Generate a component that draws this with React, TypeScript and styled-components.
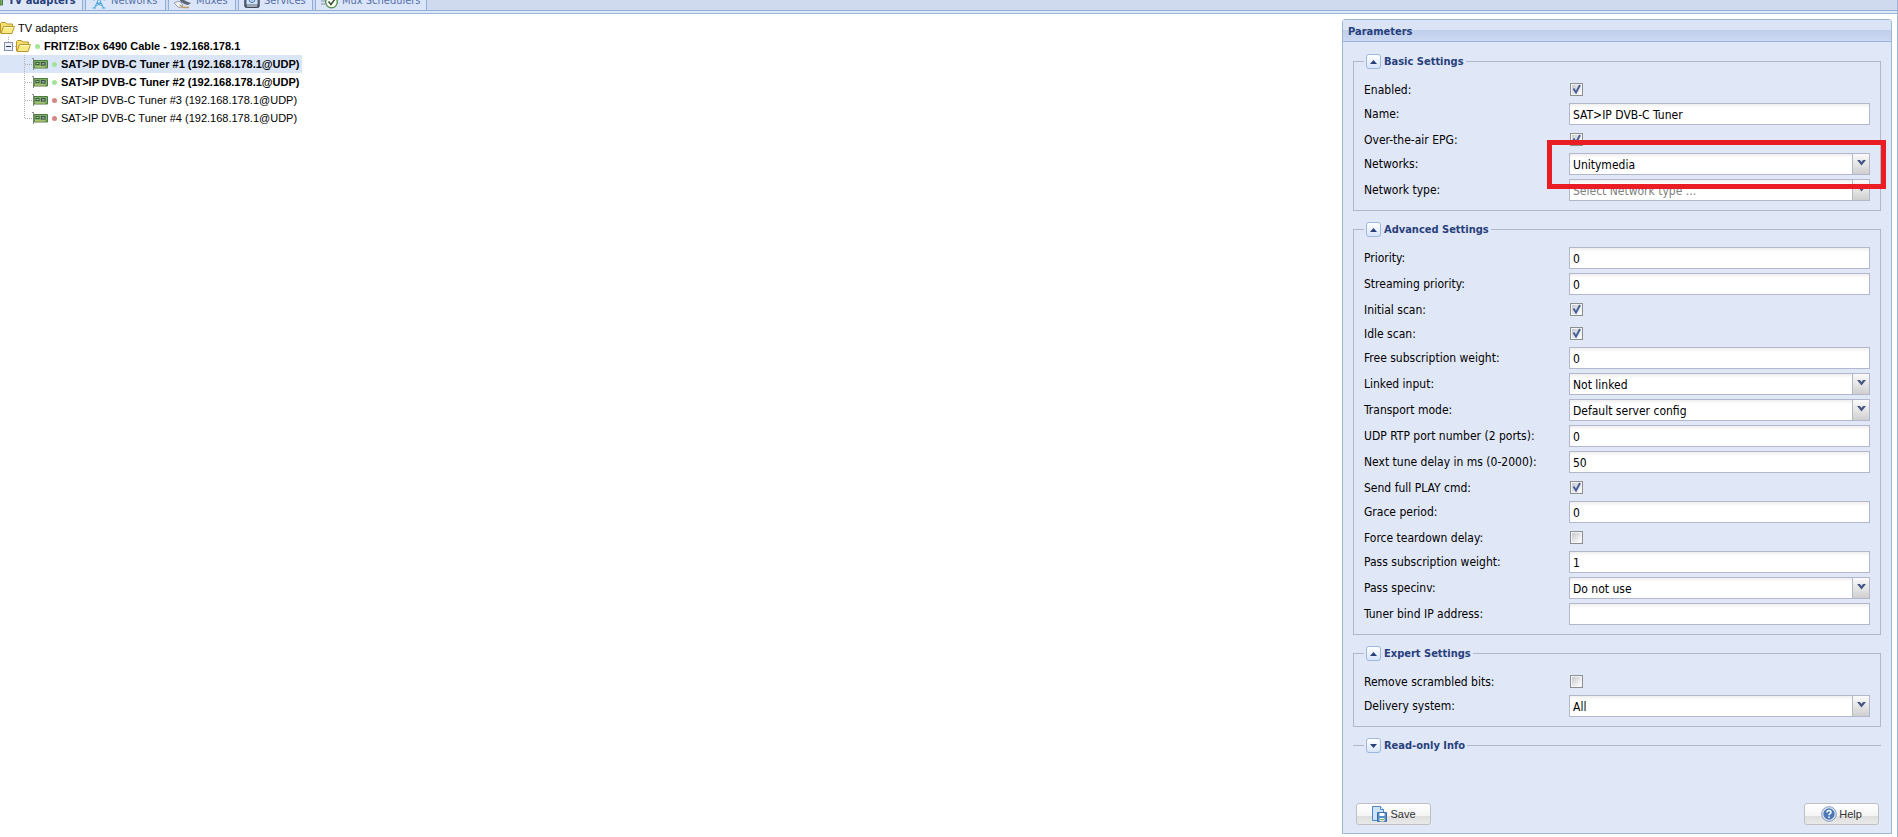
import React, { ReactNode, useState } from "react";
import styled, { createGlobalStyle, css } from "styled-components";

const GlobalStyle = createGlobalStyle`
  *, *::before, *::after { box-sizing: border-box; }
  html, body, #root { height: 100%; }
  body { margin: 0; background: #fff; }
`;

const uiFont = css`
  font-family: "DejaVu Sans Condensed", Tahoma, "DejaVu Sans", sans-serif;
`;
const arial = css`
  font-family: "Liberation Sans", Arial, sans-serif;
`;

const Page = styled.div`
  min-height: 100%;
  display: flex;
  flex-direction: column;
  border-right: 1px solid #99b5dc;
  color: #000;
`;

const TabStrip = styled.nav`
  height: 11px;
  display: flex;
  align-items: flex-end;
  gap: 2px;
  overflow: hidden;
  background: #d0daee;
  border-bottom: 1px solid #94b0d8;
`;

const Tab = styled.a<{ $active?: boolean; $width: number }>`
  ${uiFont}
  flex: none;
  width: ${(p) => p.$width}px;
  height: 19px;
  display: flex;
  align-items: center;
  gap: 4px;
  padding-left: ${(p) => (p.$active ? 0 : 5)}px;
  border: solid #8fadd9;
  border-width: 0 1px;
  border-left-width: ${(p) => (p.$active ? 0 : 1)}px;
  font-size: 11px;
  line-height: 18px;
  white-space: nowrap;
  text-decoration: none;
  font-weight: ${(p) => (p.$active ? "bold" : "normal")};
  color: ${(p) => (p.$active ? "#28417c" : "#5670a6")};
  background: ${(p) => (p.$active ? "#dee8f8" : "#dae5fa")};
`;

const StripFooter = styled.div`
  height: 3px;
  background: #dfe8f6;
  border-bottom: 1px solid #99b5dc;
`;

const Body = styled.div`
  flex: 1;
  display: flex;
  align-items: stretch;
  padding: 5px 5px 3px 0;
`;

const Tree = styled.ul`
  ${arial}
  flex: 1;
  margin: 0;
  padding: 0;
  list-style: none;
  font-size: 11px;
`;

const TreeRow = styled.li<{ $indent: number; $strong?: boolean; $selected?: boolean }>`
  display: flex;
  align-items: center;
  width: max-content;
  height: 18px;
  padding-left: ${(p) => p.$indent}px;
  padding-right: 3px;
  line-height: 18px;
  white-space: nowrap;
  font-weight: ${(p) => (p.$strong ? "bold" : "normal")};
  background: ${(p) => (p.$selected ? "#dae6f8" : "transparent")};
`;

const Dot = styled.span<{ $color: string }>`
  width: 5px;
  height: 5px;
  margin: 0 4px;
  border-radius: 50%;
  background: ${(p) => p.$color};
`;

const Panel = styled.form`
  ${uiFont}
  flex: none;
  width: 550px;
  display: flex;
  flex-direction: column;
  border: 1px solid #9db7d6;
  border-radius: 3px 3px 0 0;
  background: #e0e7f7;
  font-size: 12px;
`;

const PanelTitle = styled.h2`
  margin: 0;
  height: 22px;
  padding: 0 5px;
  font-size: 11px;
  line-height: 23px;
  color: #28417c;
  border-bottom: 1px solid #99b5dc;
  background: linear-gradient(#dae4f5 0 50%, #c0cfed 50%, #cdd9f1 100%);
`;

const Groups = styled.div`
  flex: 1;
  display: flex;
  flex-direction: column;
  gap: 18px;
  padding: 19px 10px 0;
`;

const Group = styled.section<{ $open: boolean }>`
  position: relative;
  border: solid #b2b7cb;
  border-width: ${(p) => (p.$open ? "1px" : "1px 0 0")};
  padding: ${(p) => (p.$open ? "17px 10px 5px" : "0")};
`;

const Legend = styled.h3<{ $open: boolean }>`
  position: absolute;
  top: -8px;
  left: ${(p) => (p.$open ? 10 : 11)}px;
  margin: 0;
  height: 15px;
  display: flex;
  align-items: center;
  gap: 3px;
  padding: 0 2px;
  font-size: 11px;
  line-height: 15px;
  color: #28417c;
  background: #e0e7f7;
`;

const Toggle = styled.button`
  width: 15px;
  height: 15px;
  padding: 0;
  display: grid;
  place-items: center;
  border: 1px solid #9cb9dc;
  border-radius: 3px;
  background: linear-gradient(#fff, #d8e5f7);
`;

const Field = styled.div<{ $check?: boolean }>`
  height: ${(p) => (p.$check ? 24 : 26)}px;
  display: grid;
  grid-template-columns: 205px 1fr;
  align-items: start;
`;

const Label = styled.label`
  line-height: 22px;
  white-space: nowrap;
`;

const inputLook = css`
  ${uiFont}
  width: 100%;
  height: 22px;
  margin: 0;
  border: 1px solid #b2b7cb;
  border-radius: 0;
  font-size: 12px;
  color: #000;
  background: linear-gradient(#eeeeef, #fff 4px);
`;

const TextInput = styled.input`
  ${inputLook}
  padding: 1px 3px 0;
`;

const SelectWrap = styled.div`
  position: relative;
`;

const Select = styled.select<{ $muted: boolean }>`
  ${inputLook}
  appearance: none;
  display: block;
  padding: 1px 20px 0 3px;
  color: ${(p) => (p.$muted ? "#808080" : "#000")};
`;

const Trigger = styled.span`
  position: absolute;
  top: 1px;
  right: 1px;
  width: 17px;
  height: 20px;
  padding-bottom: 2px;
  display: grid;
  place-items: center;
  pointer-events: none;
  border-left: 1px solid #b2b7cb;
  background: linear-gradient(#fafafa, #e6e6e6 50%, #cfcfcf);
`;

const CheckBox = styled.input`
  appearance: none;
  width: 13px;
  height: 13px;
  margin: 4px 1px;
  border: 1px solid #8e8f8f;
  background: linear-gradient(135deg, #c6c9cf, #fff) content-box, #f4f4f4;
  padding: 1px;
  &:checked {
    background: url("data:image/svg+xml,%3Csvg xmlns='http://www.w3.org/2000/svg' viewBox='0 0 11 11'%3E%3Cpath d='M2.500 4.500l2.500 4 4-7.500' fill='none' stroke='%234a5f97' stroke-width='2'/%3E%3C/svg%3E"),
      linear-gradient(135deg, #c6c9cf, #fff) content-box, #f4f4f4;
  }
`;

const Highlight = styled.div`
  position: absolute;
  z-index: 1;
  inset: -13px -16px -14px -22px;
  border: 5px solid #ea1c24;
  pointer-events: none;
`;

const Actions = styled.footer`
  display: flex;
  justify-content: space-between;
  padding: 8px 12px 8px 13px;
`;

const ActionButton = styled.button`
  ${arial}
  width: 75px;
  height: 22px;
  display: flex;
  align-items: center;
  justify-content: center;
  gap: 2px;
  padding: 0;
  border: 1px solid #c0c0c4;
  border-radius: 3px;
  font-size: 11px;
  color: #333;
  background: linear-gradient(#fff, #f4f4f4 60%, #dedede 60%, #e9e9e9);
`;

const Folder = () => (
  <svg width="15" height="16" viewBox="1 0 15 16" aria-hidden="true">
    <path d="M1.500 13V3.500l1-1h4l1.500 1.500h5.500v3" fill="#f3df6b" stroke="#b8962f" />
    <path d="M2 13.500L4.500 6.500h11l-2.500 7z" fill="#f9ea84" stroke="#b8962f" />
    <path d="M5 7.500h9.500" stroke="#fffbd0" />
  </svg>
);

const Expander = () => (
  <svg width="16" height="18" viewBox="0 0 16 18" aria-hidden="true">
    <path d="M8.500 0v5M13 9.500h3" stroke="#b0b0b0" strokeDasharray="1 1" />
    <rect x="4.500" y="5.500" width="8" height="8" fill="#eef0f6" stroke="#8291b5" />
    <path d="M6 9.500h5" stroke="#2b3b68" />
  </svg>
);

const Elbow = ({ last }: { last?: boolean }) => (
  <svg width="8" height="18" viewBox="0 0 8 18" aria-hidden="true">
    <path d={last ? "M.500 0v9" : "M.500 0v18"} stroke="#b0b0b0" strokeDasharray="1 1" />
    <path d="M1 9.500h7" stroke="#b0b0b0" strokeDasharray="1 1" />
  </svg>
);

const Card = () => (
  <svg width="16" height="16" viewBox="0 0 16 16" aria-hidden="true">
    <path d="M0 2.500h1.500V14" fill="none" stroke="#8a8a8a" />
    <path d="M2 4.500h13.500v7.500H2z" fill="#7fae6b" stroke="#4c7a3f" />
    <path d="M3.500 6h4v3h-4z" fill="#3c5c38" />
    <path d="M4.500 7h2v1h-2z" fill="#b9d6aa" />
    <path d="M9 6h4.500v3.500H9z" fill="#3f4f48" />
    <path d="M10 7h2.500v1.500H10z" fill="#9aa7a8" />
    <path d="M3.500 11h9.500" stroke="#e0d975" strokeWidth="1.500" strokeDasharray="1 1" />
  </svg>
);

const Antenna = () => (
  <svg width="16" height="16" viewBox="0 0 16 16" aria-hidden="true">
    <path d="M8 5L3.500 15M8 5l4.500 10M6 10h4M5 13l5-3M11 13l-5-3M1.500 15h3.500M11 15h3.500" fill="none" stroke="#4aa6d4" />
    <circle cx="8" cy="4" r="2" fill="#4aa6d4" />
    <path d="M3 1q-2 3.500 0 7M13 1q2 3.500 0 7" fill="none" stroke="#7fc0de" />
  </svg>
);

const Dish = () => (
  <svg width="18" height="16" viewBox="0 0 18 16" aria-hidden="true">
    <path d="M0 10q4-3 7-1l2 4q-3 3-5 1z" fill="#eceef2" stroke="#9aa0aa" />
    <path d="M5 2q-1 8 9 10l3-2Q9 8 5 2z" fill="#5b6577" />
    <path d="M6 12l3 2.500h6" fill="none" stroke="#c09a62" strokeWidth="1.500" />
  </svg>
);

const Screen = () => (
  <svg width="16" height="16" viewBox="0 0 16 16" aria-hidden="true">
    <rect x=".8" y="1" width="14.400" height="13.500" rx="1.500" fill="#566277" stroke="#3d4758" />
    <rect x="2.500" y="2" width="11" height="9.500" fill="#cfe2f6" />
    <circle cx="8" cy="6.500" r="3" fill="none" stroke="#4476b4" />
    <circle cx="8" cy="6.500" r="1" fill="#4476b4" />
    <path d="M3 13h10" stroke="#e3e8ef" />
  </svg>
);

const ClockCheck = () => (
  <svg width="17" height="16" viewBox="0 0 17 16" aria-hidden="true">
    <path d="M0 8h5M0 11h4" stroke="#8292a8" />
    <circle cx="10.500" cy="9" r="5.800" fill="#f6fff0" stroke="#4f8a46" strokeWidth="1.300" />
    <path d="M7.500 8.500l2.500 3 4-5.500" fill="none" stroke="#3f4a3c" strokeWidth="1.500" />
  </svg>
);

const SaveIcon = () => (
  <svg width="17" height="18" viewBox="0 0 17 18" aria-hidden="true">
    <path d="M1.500 1.500h8l3 3v11h-11z" fill="#cfe4fa" stroke="#4a86c8" />
    <path d="M9.500 1.500v3h3" fill="#fff" stroke="#4a86c8" />
    <path d="M6.500 7.500h9v9h-9z" fill="#5a8ecb" stroke="#3b6bab" />
    <path d="M8.500 8h5v3h-5z" fill="#fff" />
    <path d="M8.500 13h5v3.500h-5z" fill="#e8f0da" />
    <path d="M9 14.500h4" stroke="#83b154" />
  </svg>
);

const HelpIcon = () => (
  <svg width="16" height="16" viewBox="0 0 16 16" aria-hidden="true">
    <circle cx="8" cy="8" r="7.300" fill="#e6edf7" stroke="#7f99c0" />
    <circle cx="8" cy="8" r="5.700" fill="#4d78b5" />
    <path d="M6 6.500q0-2 2-2t2 1.800q0 1-1.200 1.600Q8 8.400 8 9.300" fill="none" stroke="#fff" strokeWidth="1.500" />
    <path d="M7.200 10.400h1.600V12H7.200z" fill="#fff" />
  </svg>
);

type Item = {
  label: string;
  kind: "text" | "select" | "check";
  value?: string;
  checked?: boolean;
  muted?: boolean;
  marked?: boolean;
};

const text = (label: string, value: string): Item => ({ label, kind: "text", value });
const check = (label: string, checked: boolean): Item => ({ label, kind: "check", checked });
const select = (label: string, value: string, extra: Partial<Item> = {}): Item => ({
  label,
  kind: "select",
  value,
  ...extra,
});

const groups: { title: string; items: Item[]; closed?: boolean }[] = [
  {
    title: "Basic Settings",
    items: [
      check("Enabled:", true),
      text("Name:", "SAT>IP DVB-C Tuner"),
      check("Over-the-air EPG:", true),
      select("Networks:", "Unitymedia", { marked: true }),
      select("Network type:", "Select Network type ...", { muted: true }),
    ],
  },
  {
    title: "Advanced Settings",
    items: [
      text("Priority:", "0"),
      text("Streaming priority:", "0"),
      check("Initial scan:", true),
      check("Idle scan:", true),
      text("Free subscription weight:", "0"),
      select("Linked input:", "Not linked"),
      select("Transport mode:", "Default server config"),
      text("UDP RTP port number (2 ports):", "0"),
      text("Next tune delay in ms (0-2000):", "50"),
      check("Send full PLAY cmd:", true),
      text("Grace period:", "0"),
      check("Force teardown delay:", false),
      text("Pass subscription weight:", "1"),
      select("Pass specinv:", "Do not use"),
      text("Tuner bind IP address:", ""),
    ],
  },
  {
    title: "Expert Settings",
    items: [check("Remove scrambled bits:", false), select("Delivery system:", "All")],
  },
  { title: "Read-only Info", items: [], closed: true },
];

const FieldRow = ({ item }: { item: Item }) => {
  const id = item.label.toLowerCase().replace(/[^a-z0-9]+/g, "-");
  return (
    <Field $check={item.kind === "check"}>
      <Label htmlFor={id}>{item.label}</Label>
      {item.kind === "text" && <TextInput id={id} type="text" defaultValue={item.value} />}
      {item.kind === "check" && <CheckBox id={id} type="checkbox" defaultChecked={item.checked} />}
      {item.kind === "select" && (
        <SelectWrap>
          <Select id={id} $muted={!!item.muted}>
            <option>{item.value}</option>
          </Select>
          <Trigger>
            <svg width="9" height="6" viewBox="0 0 9 6" aria-hidden="true">
              <path d="M0 0h3l1.500 2L6 0h3L4.500 5.500z" fill="#465785" />
            </svg>
          </Trigger>
          {item.marked && <Highlight />}
        </SelectWrap>
      )}
    </Field>
  );
};

const Fieldset = ({ title, items, closed }: { title: string; items: Item[]; closed?: boolean }) => {
  const [open, setOpen] = useState(!closed);
  return (
    <Group $open={open}>
      <Legend $open={open}>
        <Toggle type="button" aria-label={title} aria-expanded={open} onClick={() => setOpen(!open)}>
          <svg width="7" height="4" viewBox="0 0 7 4" aria-hidden="true">
            <path d={open ? "M0 4h7L3.500 0z" : "M0 0h7L3.500 4z"} fill="#28417c" />
          </svg>
        </Toggle>
        {title}
      </Legend>
      {open && items.map((item) => <FieldRow key={item.label} item={item} />)}
    </Group>
  );
};

const tabs: { name: string; icon: ReactNode; width: number }[] = [
  { name: "Networks", icon: <Antenna />, width: 81 },
  { name: "Muxes", icon: <Dish />, width: 68 },
  { name: "Services", icon: <Screen />, width: 75 },
  { name: "Mux Schedulers", icon: <ClockCheck />, width: 112 },
];

const tuners = [1, 2, 3, 4];

export default function App() {
  return (
    <Page>
      <GlobalStyle />
      <TabStrip>
        <Tab href="#adapters" $active $width={83}>
          <svg width="4" height="16" viewBox="0 0 4 16" aria-hidden="true">
            <path d="M0 3h2.500v9H0z" fill="#7fae6b" stroke="#4c7a3f" />
          </svg>
          TV adapters
        </Tab>
        {tabs.map((tab) => (
          <Tab key={tab.name} href={"#" + tab.name} $width={tab.width}>
            {tab.icon}
            {tab.name}
          </Tab>
        ))}
      </TabStrip>
      <StripFooter />
      <Body>
        <Tree>
          <TreeRow $indent={0}>
            <Folder />
            &nbsp;TV adapters
          </TreeRow>
          <TreeRow $indent={0} $strong>
            <Expander />
            <Folder />
            <Dot $color="#a3e398" />
            FRITZ!Box 6490 Cable - 192.168.178.1
          </TreeRow>
          {tuners.map((n) => (
            <TreeRow key={n} $indent={24} $strong={n < 3} $selected={n === 1}>
              <Elbow last={n === 4} />
              <Card />
              <Dot $color={n < 3 ? "#a3e398" : "#d68783"} />
              {`SAT>IP DVB-C Tuner #${n} (192.168.178.1@UDP)`}
            </TreeRow>
          ))}
        </Tree>
        <Panel onSubmit={(e) => e.preventDefault()}>
          <PanelTitle>Parameters</PanelTitle>
          <Groups>
            {groups.map((g) => (
              <Fieldset key={g.title} {...g} />
            ))}
          </Groups>
          <Actions>
            <ActionButton type="submit">
              <SaveIcon />
              Save
            </ActionButton>
            <ActionButton type="button">
              <HelpIcon />
              Help
            </ActionButton>
          </Actions>
        </Panel>
      </Body>
    </Page>
  );
}
